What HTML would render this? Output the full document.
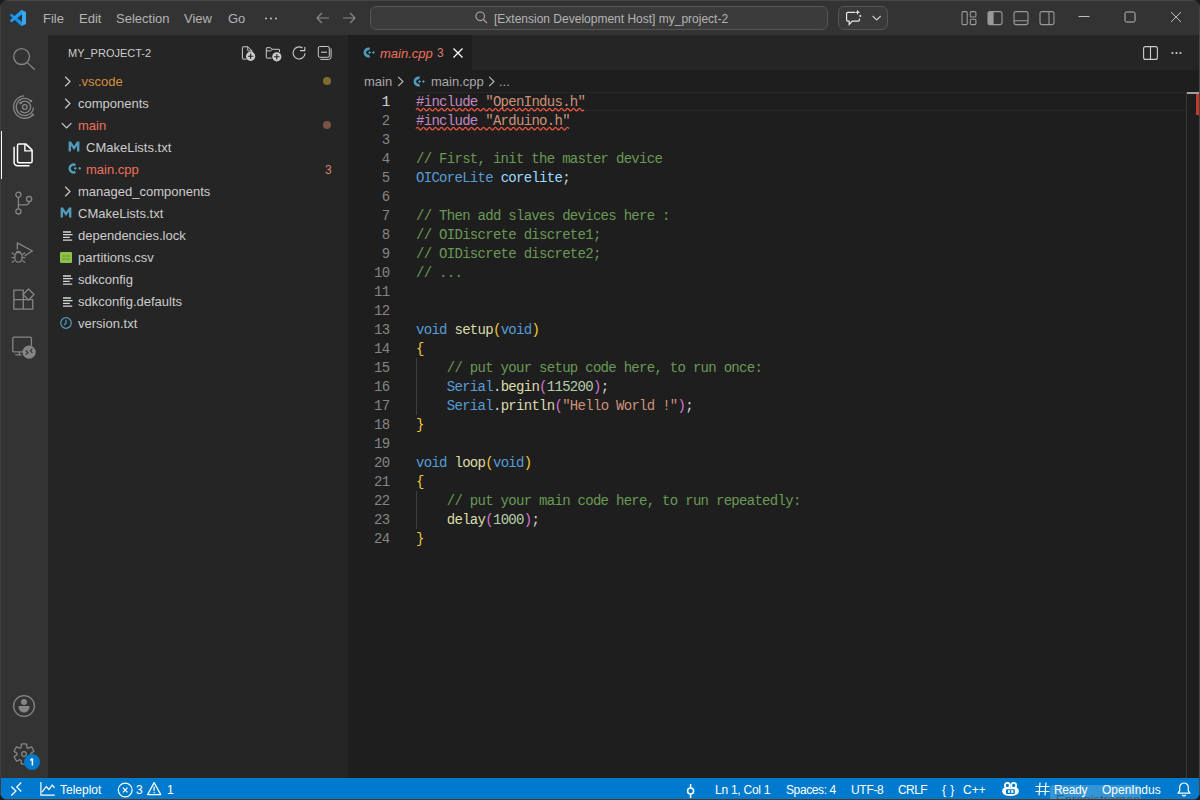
<!DOCTYPE html>
<html><head><meta charset="utf-8">
<style>
*{margin:0;padding:0;box-sizing:border-box}
html,body{width:1200px;height:800px;overflow:hidden;background:#1c1c1c}
body{font-family:"Liberation Sans",sans-serif;font-size:13px;color:#cccccc;position:relative}
.abs{position:absolute}
svg{position:absolute;overflow:visible}
#win{left:0;top:0;width:1200px;height:800px;border-radius:8px;overflow:hidden;background:#1e1e1e}
#titlebar{left:0;top:0;width:1200px;height:35px;background:#333333}
#activity{left:0;top:35px;width:48px;height:743px;background:#333333}
#sidebar{left:48px;top:35px;width:300px;height:743px;background:#252526}
#editor{left:348px;top:35px;width:852px;height:743px;background:#1e1e1e}
#tabs{left:0;top:0;width:852px;height:35px;background:#252526}
#status{left:0;top:778px;width:1200px;height:22px;background:#007acc;color:#fff;font-size:12px}
.menu{top:1px;height:35px;line-height:36px;color:#b4b4b4;font-size:13px}
.row{left:0;width:300px;height:22px;line-height:22px;font-size:13px;color:#cccccc}
.row span{position:absolute;top:0}
.mono{font-family:"Liberation Mono",monospace;font-size:14px;line-height:19px;white-space:pre;letter-spacing:-0.71px}
.code{left:68px;top:58px;color:#d4d4d4}
.ln{left:0;top:58px;width:41.5px;text-align:right;color:#858585}
.kw{color:#569cd6}.pp{color:#c586c0}.str{color:#ce9178}.cm{color:#6a9955}.var{color:#9cdcfe}.fn{color:#dcdcaa}.num{color:#b5cea8}.b1{color:#f0c83c}.b2{color:#d274d2}
.st{top:1px;height:22px;line-height:22px;color:#fff;font-size:12px;white-space:nowrap}
.ai{stroke:#858585;fill:none;stroke-width:1.3}
</style></head>
<body>
<div id="win" class="abs">
<div id="titlebar" class="abs">
  <svg style="left:10px;top:10px" width="16" height="16" viewBox="0 0 100 100">
    <path fill="#0065a9" d="M96.46 10.8L75.86.87a6.23 6.23 0 0 0-7.1 1.2L29.36 38.04 12.19 25.01a4.16 4.16 0 0 0-5.32.24L1.36 30.25a4.16 4.16 0 0 0 0 6.16L16.25 50 1.36 63.58a4.16 4.16 0 0 0 0 6.16l5.51 5.01a4.16 4.16 0 0 0 5.32.24l17.17-13.03 39.41 35.96a6.23 6.23 0 0 0 7.1 1.2l20.6-9.91A6.25 6.25 0 0 0 100 83.6V16.4a6.25 6.25 0 0 0-3.54-5.6zM75.02 72.7L45.11 50l29.91-22.7z"/>
    <path fill="#1a8fe0" d="M1.36 30.25L6.87 25.25a4.16 4.16 0 0 1 5.32-.24L75.02 72.7V99.4a6.23 6.23 0 0 1-6.25-1.49L1.36 36.41a4.16 4.16 0 0 1 0-6.16z"/>
    <path fill="#1f9cf0" d="M1.36 69.75l5.51 5.01a4.16 4.16 0 0 0 5.32.24L75.02 27.3V.6a6.23 6.23 0 0 0-6.25 1.49L1.36 63.58a4.16 4.16 0 0 0 0 6.16z"/>
    <path fill="#3aa6ef" d="M75.86 99.13a6.24 6.24 0 0 1-7.1-1.2c2.3 2.3 6.26.67 6.26-2.6V4.67c0-3.27-3.95-4.9-6.26-2.6a6.24 6.24 0 0 1 7.1-1.2l20.6 9.92A6.25 6.25 0 0 1 100 16.4v67.2a6.25 6.25 0 0 1-3.54 5.6z"/>
  </svg>
  <div class="abs menu" style="left:43px">File</div>
  <div class="abs menu" style="left:79px">Edit</div>
  <div class="abs menu" style="left:116px">Selection</div>
  <div class="abs menu" style="left:184px">View</div>
  <div class="abs menu" style="left:228px">Go</div>
  <svg style="left:264px;top:17px" width="14" height="3"><circle cx="2" cy="1.5" r="1.1" fill="#b4b4b4"/><circle cx="7" cy="1.5" r="1.1" fill="#b4b4b4"/><circle cx="12" cy="1.5" r="1.1" fill="#b4b4b4"/></svg>
  <!-- nav arrows -->
  <svg style="left:316px;top:12px" width="14" height="12" viewBox="0 0 14 12"><path d="M6 1L1 6l5 5M1 6h12" stroke="#8a8a8a" stroke-width="1.2" fill="none"/></svg>
  <svg style="left:342px;top:12px" width="14" height="12" viewBox="0 0 14 12"><path d="M8 1l5 5-5 5M13 6H1" stroke="#8a8a8a" stroke-width="1.2" fill="none"/></svg>
  <div class="abs" style="left:370px;top:6px;width:458px;height:24px;border:1px solid #555555;border-radius:6px;background:#3b3b3b"></div>
  <svg style="left:475px;top:11px" width="13" height="13" viewBox="0 0 13 13"><circle cx="5.2" cy="5.3" r="4.3" stroke="#a8a8a8" stroke-width="1.1" fill="none"/><path d="M8.3 8.4L12 12.1" stroke="#a8a8a8" stroke-width="1.2"/></svg>
  <div class="abs" style="left:494px;top:1px;height:35px;line-height:36px;font-size:12px;color:#b4b4b4;white-space:nowrap">[Extension Development Host] my_project-2</div>
  <div class="abs" style="left:838px;top:6px;width:50px;height:24px;border:1px solid #555555;border-radius:6px;background:#3a3a3a"></div>
  <svg style="left:846px;top:10px" width="18" height="16" viewBox="0 0 18 16"><path d="M9.2 2.3H1.6a1 1 0 0 0-1 1v6.8a1 1 0 0 0 1 1h1.6v3.3l3.1-3.3h6.1a1 1 0 0 0 1-1V8.6" stroke="#e8e8e8" stroke-width="1.2" fill="none"/><path d="M11.6-.3l.7 1.9 1.9.7-1.9.7-.7 1.9-.7-1.9-1.9-.7 1.9-.7z" fill="#e8e8e8"/><path d="M14.3 4.6l1.3 1.3-1.3 1.3-1.3-1.3z" fill="#d8d8d8"/></svg>
  <svg style="left:872px;top:15px" width="10" height="6" viewBox="0 0 10 6"><path d="M.7 1l4 4 4-4" stroke="#cccccc" stroke-width="1.1" fill="none"/></svg>
  <!-- layout icons -->
  <svg style="left:961px;top:11px" width="16" height="14" viewBox="0 0 16 14"><rect x="1" y=".6" width="5.2" height="13" rx="1" stroke="#9a9a9a" stroke-width="1.1" fill="none"/><rect x="9.3" y=".6" width="5.6" height="5.4" rx="1" stroke="#9a9a9a" stroke-width="1.1" fill="none"/><rect x="9.3" y="8.2" width="5.6" height="5.4" rx="1" stroke="#9a9a9a" stroke-width="1.1" fill="none"/></svg>
  <svg style="left:987px;top:11px" width="16" height="14" viewBox="0 0 16 14"><path d="M3 .6h3.6v13H3a2 2 0 0 1-2-2V2.6a2 2 0 0 1 2-2z" fill="#9a9a9a"/><rect x="1" y=".6" width="14" height="13" rx="2" stroke="#9a9a9a" stroke-width="1.1" fill="none"/></svg>
  <svg style="left:1013px;top:11px" width="16" height="14" viewBox="0 0 16 14"><rect x="1" y=".6" width="14" height="13" rx="2" stroke="#9a9a9a" stroke-width="1.1" fill="none"/><path d="M1 9.8h14" stroke="#9a9a9a" stroke-width="1.1"/></svg>
  <svg style="left:1039px;top:11px" width="16" height="14" viewBox="0 0 16 14"><rect x="1" y=".6" width="14" height="13" rx="2" stroke="#9a9a9a" stroke-width="1.1" fill="none"/><path d="M10 .6v13" stroke="#9a9a9a" stroke-width="1.1"/></svg>
  <!-- window controls -->
  <svg style="left:1078px;top:11px" width="12" height="12" viewBox="0 0 12 12"><path d="M.5 5.5h11" stroke="#bdbdbd" stroke-width="1"/></svg>
  <svg style="left:1124px;top:11px" width="12" height="12" viewBox="0 0 12 12"><rect x="1" y="1" width="10" height="10" rx="1.5" stroke="#bdbdbd" stroke-width="1" fill="none"/></svg>
  <svg style="left:1170px;top:11px" width="12" height="12" viewBox="0 0 12 12"><path d="M1 1l10 10M11 1L1 11" stroke="#bdbdbd" stroke-width="1"/></svg>
</div>

<div id="activity" class="abs">
  <div class="abs" style="left:0;top:96px;width:2px;height:48px;background:#ffffff"></div>
  <!-- search -->
  <svg style="left:12px;top:12px" width="24" height="24" viewBox="0 0 24 24"><circle cx="9.6" cy="9.6" r="7.9" class="ai" stroke-width="1.5"/><path d="M15.3 15.6L22.8 22.8" class="ai" stroke-width="1.6"/></svg>
  <!-- concentric -->
  <svg style="left:12px;top:60px" width="26" height="24" viewBox="0 0 26 24">
    <path d="M12.02 0.83A11.2 11.2 0 1 0 20.72 19.92" class="ai" stroke-width="1.2"/>
    <path d="M18.99 6.02A8.6 8.6 0 1 0 21.39 12.45" class="ai" stroke-width="1.2"/>
    <path d="M8.7 7.9A5.8 5.8 0 1 1 8.36 15.73" class="ai" stroke-width="1.2"/>
    <circle cx="12.8" cy="12" r="2.3" class="ai" stroke-width="1.1"/>
    <circle cx="20.72" cy="19.92" r="1.3" fill="#858585"/><circle cx="18.99" cy="6.02" r="1.3" fill="#858585"/><circle cx="8.7" cy="7.9" r="1.3" fill="#858585"/>
  </svg>
  <!-- explorer -->
  <svg style="left:12px;top:107px" width="24" height="26" viewBox="0 0 24 26">
    <path d="M5.5 3.4v15.9a1.5 1.5 0 0 0 1.5 1.5h11.6a1.5 1.5 0 0 0 1.5-1.5V8.1L13.7 1.9H7a1.5 1.5 0 0 0-1.5 1.5z" stroke="#ffffff" stroke-width="1.5" fill="none" stroke-linejoin="round"/>
    <path d="M12.9 2.2v6.7h7" stroke="#ffffff" stroke-width="1.4" fill="none"/>
    <path d="M2.1 4.8v15.6a3.4 3.4 0 0 0 3.4 3.4h12" stroke="#ffffff" stroke-width="1.5" fill="none"/>
  </svg>
  <!-- scm -->
  <svg style="left:12px;top:156px" width="24" height="24" viewBox="0 0 24 24">
    <circle cx="6.4" cy="3.7" r="2.6" class="ai" stroke-width="1.3"/>
    <circle cx="6.4" cy="20.4" r="2.6" class="ai" stroke-width="1.3"/>
    <circle cx="17.1" cy="7.9" r="2.6" class="ai" stroke-width="1.3"/>
    <path d="M6.4 6.3v11.5M6.4 13.8h7.5a3.2 3.2 0 0 0 3.2-3.2V10.5" class="ai" stroke-width="1.3"/>
  </svg>
  <!-- debug -->
  <svg style="left:10px;top:203px" width="26" height="28" viewBox="0 0 26 28">
    <path d="M7.35 11.5V4.9L22.4 13 14.7 17.9" class="ai" stroke-width="1.5" stroke-linejoin="round"/>
    <path d="M4.9 17.9a3.55 3.55 0 0 1 7.1 0v2.7a3.55 3.55 0 0 1-7.1 0z" class="ai" stroke-width="1.4"/>
    <path d="M6.2 15.3a2.3 2.3 0 0 1 4.5 0" class="ai" stroke-width="1.4"/>
    <path d="M1.8 14.7l2.6 1.8M15.1 14.7l-2.6 1.8M1.6 19.6h3.2M15.3 19.6h-3.2M1.8 24.5l2.6-1.8M15.1 24.5l-2.6-1.8" class="ai" stroke-width="1.3"/>
  </svg>
  <!-- extensions -->
  <svg style="left:10px;top:250px" width="28" height="28" viewBox="0 0 28 28">
    <path d="M3.85 5.1H13.3V24.15H3.85zM3.85 14.7H22.75V24.15H13.3" class="ai" stroke-width="1.4" stroke-linejoin="round"/>
    <path d="M18.55 3.95l5.5 5.5-5.5 5.5-5.5-5.5z" class="ai" stroke-width="1.4" stroke-linejoin="round"/>
  </svg>
  <!-- remote -->
  <svg style="left:10px;top:298px" width="28" height="28" viewBox="0 0 28 28">
    <path d="M17 18.9H3.8a1 1 0 0 1-1-1V5.2a1 1 0 0 1 1-1h16.6a1 1 0 0 1 1 1v7.5" class="ai" stroke-width="1.4"/>
    <path d="M9.45 19v2.6M5.25 21.9h6.3" class="ai" stroke-width="1.4"/>
    <circle cx="19.1" cy="19.1" r="6.65" fill="#858585"/>
    <path d="M15.8 17.5l2.1 2.1-2.1 2.1M22.4 15.7l-2.1 2.1 2.1 2.1" stroke="#333333" stroke-width="1.2" fill="none"/>
  </svg>
  <!-- accounts -->
  <svg style="left:12px;top:659px" width="24" height="24" viewBox="0 0 24 24">
    <circle cx="12" cy="12" r="10.4" class="ai" stroke-width="1.4"/>
    <circle cx="12" cy="7.9" r="3" fill="#858585"/>
    <path d="M6.6 12h10.8v1.2a5.4 5.4 0 0 1-10.8 0z" fill="#858585"/>
  </svg>
  <!-- manage -->
  <svg style="left:12px;top:707px" width="24" height="24" viewBox="0 0 24 24">
    <path d="M9.15 5.61 L9.36 2.15 A10.20 10.20 0 0 1 14.64 2.15 L14.85 5.61 A7.00 7.00 0 0 1 16.11 6.34 L19.21 4.79 A10.20 10.20 0 0 1 21.85 9.36 L18.96 11.27 A7.00 7.00 0 0 1 18.96 12.73 L21.85 14.64 A10.20 10.20 0 0 1 19.21 19.21 L16.11 17.66 A7.00 7.00 0 0 1 14.85 18.39 L14.64 21.85 A10.20 10.20 0 0 1 9.36 21.85 L9.15 18.39 A7.00 7.00 0 0 1 7.89 17.66 L4.79 19.21 A10.20 10.20 0 0 1 2.15 14.64 L5.04 12.73 A7.00 7.00 0 0 1 5.04 11.27 L2.15 9.36 A10.20 10.20 0 0 1 4.79 4.79 L7.89 6.34 A7.00 7.00 0 0 1 9.15 5.61 Z" class="ai" stroke-width="1.4" stroke-linejoin="round"/>
    <circle cx="12" cy="12" r="2.3" class="ai" stroke-width="1.4"/>
  </svg>
  <svg style="left:24px;top:719px" width="16" height="16" viewBox="0 0 16 16"><circle cx="8" cy="8" r="8" fill="#007acc"/><path d="M8.4 4.6v7M6.2 6.3l2.2-1.7" stroke="#fff" stroke-width="1.5" fill="none"/></svg>
</div>

<div id="sidebar" class="abs">
  <div class="abs" style="left:20px;top:1px;height:35px;line-height:35px;font-size:11px;color:#cccccc">MY_PROJECT-2</div>
  <svg style="left:192px;top:9px" width="16" height="18" viewBox="0 0 16 18">
    <path d="M6.5 15.1H2.9a.5.5 0 0 1-.5-.5V3.3a.5.5 0 0 1 .5-.5H8l4 4v1.6" stroke="#cccccc" stroke-width="1" fill="none"/>
    <path d="M7.8 2.8v3.6a.5.5 0 0 0 .5.5H12" stroke="#cccccc" stroke-width="1" fill="none"/>
    <circle cx="10.6" cy="12.3" r="4.6" fill="#cccccc"/>
    <path d="M10.6 9.6v5.4M7.9 12.3h5.4" stroke="#252526" stroke-width="1.1"/>
  </svg>
  <svg style="left:216px;top:9px" width="18" height="18" viewBox="0 0 18 18">
    <path d="M7.5 14.1H2.8a.5.5 0 0 1-.5-.5V4.2a.5.5 0 0 1 .5-.5h3.7l1.5 1.6h7a.5.5 0 0 1 .5.5V8" stroke="#cccccc" stroke-width="1" fill="none"/>
    <path d="M2.3 6.9h4.3l1.4-1.4" stroke="#cccccc" stroke-width="1" fill="none"/>
    <circle cx="12.8" cy="12.8" r="4.6" fill="#cccccc"/>
    <path d="M12.8 10.1v5.4M10.1 12.8h5.4" stroke="#252526" stroke-width="1.1"/>
  </svg>
  <svg style="left:242px;top:9px" width="18" height="18" viewBox="0 0 18 18">
    <path d="M12.54 3.99A6 6 0 1 0 15.08 9.42" stroke="#cccccc" stroke-width="1.1" fill="none"/>
    <path d="M14.8 3v3.6H10" stroke="#cccccc" stroke-width="1.1" fill="none"/>
  </svg>
  <svg style="left:268px;top:9px" width="18" height="18" viewBox="0 0 18 18">
    <rect x="2.3" y="2.5" width="11" height="10.8" rx="1.5" stroke="#cccccc" stroke-width="1" fill="none"/>
    <path d="M4.4 15.4H12.6a2.5 2.5 0 0 0 2.5-2.5V4.5" stroke="#cccccc" stroke-width="1" fill="none"/>
    <path d="M5 8.2h6" stroke="#cccccc" stroke-width="1.1"/>
  </svg>
  <svg style="left:16px;top:41px" width="8" height="11" viewBox="0 0 8 11"><path d="M1.2 .8L6 5.5 1.2 10.2" stroke="#cccccc" stroke-width="1.2" fill="none"/></svg>
  <div class="abs row" style="top:35px"><span style="left:30px;top:1px;color:#d38d3a">.vscode</span></div>
  <div class="abs" style="left:274.6px;top:41.8px;width:8.4px;height:8.4px;border-radius:50%;background:#7d6e2e"></div>
  <svg style="left:16px;top:63px" width="8" height="11" viewBox="0 0 8 11"><path d="M1.2 .8L6 5.5 1.2 10.2" stroke="#cccccc" stroke-width="1.2" fill="none"/></svg>
  <div class="abs row" style="top:57px"><span style="left:30px;top:1px">components</span></div>
  <svg style="left:13px;top:87px" width="12" height="7" viewBox="0 0 12 7"><path d="M.8 1.2L5.6 6 10.4 1.2" stroke="#cccccc" stroke-width="1.2" fill="none"/></svg>
  <div class="abs row" style="top:79px"><span style="left:30px;top:1px;color:#f0705c">main</span></div>
  <div class="abs" style="left:274.6px;top:85.8px;width:8.4px;height:8.4px;border-radius:50%;background:#7a5346"></div>
  <svg style="left:20px;top:106px" width="12" height="11" viewBox="0 0 12 11"><path d="M.6 10.6V.6h2.4L6 5.1 9 .6h2.4v10H9V4.8L6 9 3 4.8v5.8z" fill="#519aba"/></svg>
  <div class="abs row" style="top:101px"><span style="left:38px;top:1px">CMakeLists.txt</span></div>
  <svg style="left:20.5px;top:128px" width="13" height="11" viewBox="0 0 13 11"><path d="M6.45 2.1A3.9 3.9 0 1 0 6.45 8.9" stroke="#519aba" stroke-width="2.4" fill="none"/><path d="M5 5.4h2.6M6.3 4.1v2.6M9.4 5.4h2.6M10.7 4.1v2.6" stroke="#519aba" stroke-width="1.1"/></svg>
  <div class="abs row" style="top:123px"><span style="left:38px;top:1px;color:#f0705c">main.cpp</span></div>
  <div class="abs" style="left:277px;top:124px;height:22px;line-height:22px;color:#d9846f;font-size:12px">3</div>
  <svg style="left:16px;top:151px" width="8" height="11" viewBox="0 0 8 11"><path d="M1.2 .8L6 5.5 1.2 10.2" stroke="#cccccc" stroke-width="1.2" fill="none"/></svg>
  <div class="abs row" style="top:145px"><span style="left:30px;top:1px">managed_components</span></div>
  <svg style="left:12px;top:172px" width="12" height="11" viewBox="0 0 12 11"><path d="M.6 10.6V.6h2.4L6 5.1 9 .6h2.4v10H9V4.8L6 9 3 4.8v5.8z" fill="#519aba"/></svg>
  <div class="abs row" style="top:167px"><span style="left:30px;top:1px">CMakeLists.txt</span></div>
  <svg style="left:15px;top:195.5px" width="10" height="10" viewBox="0 0 10 10"><path d="M0 1h8M0 3.7h9.6M0 6.4h6.8M0 9.1h9.2" stroke="#d4d7d6" stroke-width="1.3"/></svg>
  <div class="abs row" style="top:189px"><span style="left:30px;top:1px">dependencies.lock</span></div>
  <svg style="left:12px;top:216.5px" width="12" height="11" viewBox="0 0 12 11"><rect x="0" y="0" width="12" height="11" rx="1" fill="#8dc149"/><path d="M2.5 4h3M6.5 4h3M2.5 7h3M6.5 7h3" stroke="#5a8a2a" stroke-width="1"/></svg>
  <div class="abs row" style="top:211px"><span style="left:30px;top:1px">partitions.csv</span></div>
  <svg style="left:15px;top:239.5px" width="10" height="10" viewBox="0 0 10 10"><path d="M0 1h8M0 3.7h9.6M0 6.4h6.8M0 9.1h9.2" stroke="#d4d7d6" stroke-width="1.3"/></svg>
  <div class="abs row" style="top:233px"><span style="left:30px;top:1px">sdkconfig</span></div>
  <svg style="left:15px;top:261.5px" width="10" height="10" viewBox="0 0 10 10"><path d="M0 1h8M0 3.7h9.6M0 6.4h6.8M0 9.1h9.2" stroke="#d4d7d6" stroke-width="1.3"/></svg>
  <div class="abs row" style="top:255px"><span style="left:30px;top:1px">sdkconfig.defaults</span></div>
  <svg style="left:12px;top:282px" width="12" height="12" viewBox="0 0 12 12"><circle cx="6" cy="6" r="5.3" stroke="#519aba" stroke-width="1.2" fill="none"/><path d="M6 2.8V6.3L4 8" stroke="#519aba" stroke-width="1.2" fill="none"/></svg>
  <div class="abs row" style="top:277px"><span style="left:30px;top:1px">version.txt</span></div>
</div>

<div id="editor" class="abs">
  <div id="tabs" class="abs">
    <div class="abs" style="left:0;top:0;width:124px;height:35px;background:#1e1e1e"></div>
    <svg style="left:15px;top:11.5px" width="12" height="11" viewBox="0 0 12 11"><path d="M6.6 2.1A3.6 3.6 0 1 0 6.6 8.9" stroke="#519aba" stroke-width="2.6" fill="none"/><path d="M5.3 5.5h2.6M6.6 4.2v2.6M9.1 5.5h2.6M10.4 4.2v2.6" stroke="#519aba" stroke-width="1"/></svg>
    <div class="abs" style="left:32px;top:1px;height:35px;line-height:35px;font-style:italic;color:#f0705c">main.cpp</div>
    <div class="abs" style="left:89px;top:1px;height:35px;line-height:35px;color:#d08070;font-size:12px">3</div>
    <svg style="left:105px;top:13px" width="10" height="10" viewBox="0 0 10 10"><path d="M.5 .5l9 9M9.5 .5l-9 9" stroke="#ffffff" stroke-width="1.2"/></svg>
    <svg style="left:795px;top:11px" width="15" height="14" viewBox="0 0 15 14"><rect x=".6" y=".6" width="13.8" height="12.8" rx="2" stroke="#cccccc" stroke-width="1.1" fill="none"/><path d="M7.5 .6v12.8" stroke="#cccccc" stroke-width="1.1"/></svg>
    <svg style="left:823px;top:16px" width="12" height="4"><circle cx="1.5" cy="2" r="1.1" fill="#cccccc"/><circle cx="5.5" cy="2" r="1.1" fill="#cccccc"/><circle cx="9.5" cy="2" r="1.1" fill="#cccccc"/></svg>
  </div>
  <!-- breadcrumbs -->
  <div class="abs" style="left:16px;top:36px;height:22px;line-height:22px;color:#a9a9a9">main</div>
  <svg style="left:49px;top:41px" width="8" height="11" viewBox="0 0 8 11"><path d="M1.2 .8L6 5.5 1.2 10.2" stroke="#bdbdbd" stroke-width="1.1" fill="none"/></svg>
  <svg style="left:65px;top:41px" width="12" height="11" viewBox="0 0 12 11"><path d="M6.6 2.1A3.6 3.6 0 1 0 6.6 8.9" stroke="#519aba" stroke-width="2.6" fill="none"/><path d="M5.3 5.5h2.6M6.6 4.2v2.6M9.1 5.5h2.6M10.4 4.2v2.6" stroke="#519aba" stroke-width="1"/></svg>
  <div class="abs" style="left:83px;top:36px;height:22px;line-height:22px;color:#a9a9a9">main.cpp</div>
  <svg style="left:140px;top:41px" width="8" height="11" viewBox="0 0 8 11"><path d="M1.2 .8L6 5.5 1.2 10.2" stroke="#bdbdbd" stroke-width="1.1" fill="none"/></svg>
  <div class="abs" style="left:151px;top:36px;height:22px;line-height:22px;color:#a9a9a9">...</div>

  <!-- current line -->
  <div class="abs" style="left:68px;top:57px;width:770px;height:19px;border-top:1px solid #282828;border-bottom:1px solid #282828"></div>
  <!-- indent guides -->
  <div class="abs" style="left:68px;top:323px;width:1px;height:57px;background:#404040"></div>
  <div class="abs" style="left:68px;top:456px;width:1px;height:38px;background:#404040"></div>
  <!-- squiggles -->
  <svg style="left:68px;top:71.8px" width="170" height="5" viewBox="0 0 170 5"><path d="M0 2.6 q1.5 -2.6 3 0 t3 0 t3 0 t3 0 t3 0 t3 0 t3 0 t3 0 t3 0 t3 0 t3 0 t3 0 t3 0 t3 0 t3 0 t3 0 t3 0 t3 0 t3 0 t3 0 t3 0 t3 0 t3 0 t3 0 t3 0 t3 0 t3 0 t3 0 t3 0 t3 0 t3 0 t3 0 t3 0 t3 0 t3 0 t3 0 t3 0 t3 0 t3 0 t3 0 t3 0 t3 0 t3 0 t3 0 t3 0 t3 0 t3 0 t3 0 t3 0 t3 0 t3 0 t3 0 t3 0 t3 0 t3 0 t3 0" stroke="#f05540" stroke-width="1.2" fill="none"/></svg>
  <svg style="left:68px;top:90.8px" width="155" height="5" viewBox="0 0 155 5"><path d="M0 2.6 q1.5 -2.6 3 0 t3 0 t3 0 t3 0 t3 0 t3 0 t3 0 t3 0 t3 0 t3 0 t3 0 t3 0 t3 0 t3 0 t3 0 t3 0 t3 0 t3 0 t3 0 t3 0 t3 0 t3 0 t3 0 t3 0 t3 0 t3 0 t3 0 t3 0 t3 0 t3 0 t3 0 t3 0 t3 0 t3 0 t3 0 t3 0 t3 0 t3 0 t3 0 t3 0 t3 0 t3 0 t3 0 t3 0 t3 0 t3 0 t3 0 t3 0 t3 0 t3 0 t3 0" stroke="#f05540" stroke-width="1.2" fill="none"/></svg>

<div class="abs mono ln">1
2
3
4
5
6
7
8
9
10
11
12
13
14
15
16
17
18
19
20
21
22
23
24</div>
<div class="abs mono ln" style="color:#c6c6c6">1</div>
<div class="abs mono code"><span class="pp">#include</span> <span class="str">"OpenIndus.h"</span>
<span class="pp">#include</span> <span class="str">"Arduino.h"</span>

<span class="cm">// First, init the master device</span>
<span class="kw">OICoreLite</span> <span class="var">corelite</span>;

<span class="cm">// Then add slaves devices here :</span>
<span class="cm">// OIDiscrete discrete1;</span>
<span class="cm">// OIDiscrete discrete2;</span>
<span class="cm">// ...</span>


<span class="kw">void</span> <span class="fn">setup</span><span class="b1">(</span><span class="kw">void</span><span class="b1">)</span>
<span class="b1">{</span>
    <span class="cm">// put your setup code here, to run once:</span>
    <span class="kw">Serial</span>.<span class="fn">begin</span><span class="b2">(</span><span class="num">115200</span><span class="b2">)</span>;
    <span class="kw">Serial</span>.<span class="fn">println</span><span class="b2">(</span><span class="str">"Hello World !"</span><span class="b2">)</span>;
<span class="b1">}</span>

<span class="kw">void</span> <span class="fn">loop</span><span class="b1">(</span><span class="kw">void</span><span class="b1">)</span>
<span class="b1">{</span>
    <span class="cm">// put your main code here, to run repeatedly:</span>
    <span class="fn">delay</span><span class="b2">(</span><span class="num">1000</span><span class="b2">)</span>;
<span class="b1">}</span></div>

  <!-- overview ruler -->
  <div class="abs" style="left:838px;top:57px;width:1px;height:686px;background:#353535"></div>
  <div class="abs" style="left:839px;top:57px;width:12px;height:2px;background:#a0a0a0"></div>
  <div class="abs" style="left:848px;top:59px;width:3px;height:21px;background:#c0392b"></div>
  <div class="abs" style="left:851px;top:0;width:1px;height:743px;background:#3c3c3c"></div>
</div>

<div id="status" class="abs">
  <svg style="left:10px;top:4px" width="13" height="15" viewBox="0 0 13 15"><path d="M1.25 4.5L6 9 1.25 13.5M11.25 .5L6.75 5l4.5 4.5" stroke="#fff" stroke-width="1.2" fill="none"/></svg>
  <svg style="left:40px;top:4px" width="15" height="14" viewBox="0 0 15 14"><path d="M.9 0v13.1H14.7" stroke="#fff" stroke-width="1.2" fill="none"/><path d="M2 10.2L6.3 4.5 9 7.6 12.2 3l2.4 2.8" stroke="#fff" stroke-width="1.2" fill="none" stroke-linejoin="round"/></svg>
  <div class="abs st" style="left:60px">Teleplot</div>
  <svg style="left:117px;top:3.5px" width="16" height="16" viewBox="0 0 16 16"><circle cx="8.2" cy="8" r="6.9" stroke="#fff" stroke-width="1.2" fill="none"/><path d="M5.9 5.7l4.6 4.6M10.5 5.7L5.9 10.3" stroke="#fff" stroke-width="1.2"/></svg>
  <div class="abs st" style="left:136px">3</div>
  <svg style="left:147px;top:3px" width="15" height="16" viewBox="0 0 15 16"><path d="M7.1 1.6L13.8 13.6H.6z" stroke="#fff" stroke-width="1.2" fill="none" stroke-linejoin="round"/><path d="M7.1 5.6v4.4" stroke="#fff" stroke-width="1.2"/><circle cx="7.1" cy="11.6" r=".75" fill="#fff"/></svg>
  <div class="abs st" style="left:167px">1</div>

  <svg style="left:686px;top:6px" width="10" height="14" viewBox="0 0 10 14"><circle cx="4.6" cy="7" r="3" stroke="#fff" stroke-width="1.5" fill="none"/><path d="M4.6 0v3.8M4.6 10.2V14" stroke="#fff" stroke-width="1.5"/></svg>
  <div class="abs st" style="left:715px;letter-spacing:-0.25px">Ln 1, Col 1</div>
  <div class="abs st" style="left:786px;letter-spacing:-0.4px">Spaces: 4</div>
  <div class="abs st" style="left:851px;letter-spacing:-0.3px">UTF-8</div>
  <div class="abs st" style="left:898px;letter-spacing:-0.6px">CRLF</div>
  <div class="abs st" style="left:942px;letter-spacing:0.5px">{ }</div>
  <div class="abs st" style="left:963px">C++</div>
  <svg style="left:1002px;top:4px" width="17" height="14" viewBox="0 0 17 14">
    <path d="M.2 9C.2 6.6 1.5 5.8 3 5.6h11c1.5.2 2.8 1 2.8 3.4 0 3.5-3.3 4.9-8.3 4.9S.2 12.5.2 9z" fill="#fff"/>
    <circle cx="5.35" cy="3.4" r="2.5" stroke="#fff" stroke-width="1.7" fill="#007acc"/>
    <circle cx="11.7" cy="3.4" r="2.5" stroke="#fff" stroke-width="1.7" fill="#007acc"/>
    <rect x="4" y="7.3" width="8.8" height="4.7" rx="1" fill="#007acc"/>
    <rect x="6.2" y="8.1" width="1.6" height="2.8" fill="#fff"/><rect x="9.2" y="8.1" width="2.2" height="2.8" fill="#fff"/>
  </svg>
  <svg style="left:1035px;top:4px" width="15" height="14" viewBox="0 0 15 14"><path d="M5 .5L4 13.5M11 .5L10 13.5M.5 4.5h14M.5 9.5h14" stroke="#fff" stroke-width="1.2"/></svg>
  <div class="abs" style="left:1050px;top:7px;width:91px;height:15px;border-radius:4px 4px 0 0;background:rgba(255,255,255,0.2);overflow:hidden"><div class="abs" style="left:6px;top:7px;font-size:13px;line-height:15px;color:rgba(60,60,60,0.6);white-space:nowrap">Enregistrement</div></div>
  <div class="abs st" style="left:1054px;letter-spacing:-0.3px">Ready</div>
  <div class="abs st" style="left:1102px">OpenIndus</div>
  <svg style="left:1177px;top:4px" width="14" height="15" viewBox="0 0 14 15"><path d="M7 1A4.3 4.3 0 0 0 2.7 5.3v3.5L1 11.2h12l-1.7-2.4V5.3A4.3 4.3 0 0 0 7 1z" stroke="#fff" stroke-width="1.2" fill="none" stroke-linejoin="round"/><path d="M5.3 12.8a1.8 1.8 0 0 0 3.4 0" stroke="#fff" stroke-width="1.2" fill="none"/></svg>
</div>
<div class="abs" style="left:0;top:0;width:1px;height:800px;background:#3e3e3e"></div>
<div class="abs" style="left:1199px;top:0;width:1px;height:800px;background:#464646"></div>
<div class="abs" style="left:0;top:0;width:1200px;height:1px;background:#454545"></div>
<div class="abs" style="left:0;top:799px;width:1200px;height:1px;background:#45382e"></div>
</div>
</body></html>
